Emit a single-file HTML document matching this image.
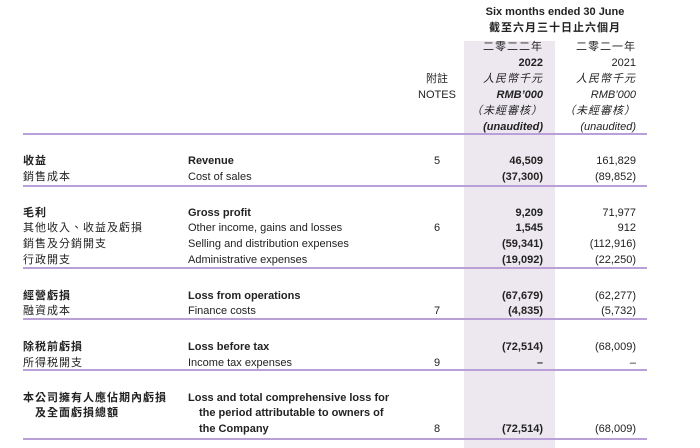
<!DOCTYPE html>
<html><head><meta charset="utf-8"><style>
body{margin:0;width:700px;height:448px;background:#fff;position:relative;overflow:hidden;font-family:"Liberation Sans","Noto Sans CJK TC",sans-serif;font-size:11px;color:#222;}
.t{position:absolute;white-space:nowrap;line-height:14px;}
.b{font-weight:bold}
.i{font-style:italic}
.r1{right:157px;text-align:right}
.r2{right:64px;text-align:right}
.n{left:417px;width:40px;text-align:center}
.shade{position:absolute;left:464px;top:41px;width:91px;height:407px;background:#ede8f0}
.ln{position:absolute;left:23px;width:624px;height:2px;background:#b9a0d6}
.c{left:23px;letter-spacing:1px}
.e{left:188px}
</style></head><body>
<div class="shade"></div>
<div class="t b" style="left:470px;width:170px;text-align:center;top:5px">Six months ended 30 June</div>
<div class="t b" style="left:470px;width:170px;text-align:center;top:21px;letter-spacing:1px">截至六月三十日止六個月</div>
<div class="t r1" style="top:40px;letter-spacing:1px">二零二二年</div>
<div class="t r2" style="top:40px;letter-spacing:1px">二零二一年</div>
<div class="t r1 b" style="top:56px">2022</div>
<div class="t r2" style="top:56px">2021</div>
<div class="t r1 i" style="top:72px;letter-spacing:1px">人民幣千元</div>
<div class="t r2 i" style="top:72px;letter-spacing:1px">人民幣千元</div>
<div class="t r1 b i" style="top:88px">RMB’000</div>
<div class="t r2 i" style="top:88px">RMB’000</div>
<div class="t r1 i" style="top:104px;letter-spacing:1px">（未經審核）</div>
<div class="t r2 i" style="top:104px;letter-spacing:1px">（未經審核）</div>
<div class="t r1 b i" style="top:120px">(unaudited)</div>
<div class="t r2 i" style="top:120px">(unaudited)</div>
<div class="t n" style="top:72px">附註</div>
<div class="t n" style="top:88px">NOTES</div>
<div class="ln" style="top:133px"></div>

<div class="t c b" style="top:154px">收益</div><div class="t e b" style="top:154px">Revenue</div><div class="t n" style="top:154px">5</div><div class="t r1 b" style="top:154px">46,509</div><div class="t r2" style="top:154px">161,829</div>
<div class="t c" style="top:170px">銷售成本</div><div class="t e" style="top:170px">Cost of sales</div><div class="t r1 b" style="top:170px">(37,300)</div><div class="t r2" style="top:170px">(89,852)</div>
<div class="ln" style="top:185px"></div>

<div class="t c b" style="top:206px">毛利</div><div class="t e b" style="top:206px">Gross profit</div><div class="t r1 b" style="top:206px">9,209</div><div class="t r2" style="top:206px">71,977</div>
<div class="t c" style="top:221px">其他收入、收益及虧損</div><div class="t e" style="top:221px">Other income, gains and losses</div><div class="t n" style="top:221px">6</div><div class="t r1 b" style="top:221px">1,545</div><div class="t r2" style="top:221px">912</div>
<div class="t c" style="top:237px">銷售及分銷開支</div><div class="t e" style="top:237px">Selling and distribution expenses</div><div class="t r1 b" style="top:237px">(59,341)</div><div class="t r2" style="top:237px">(112,916)</div>
<div class="t c" style="top:253px">行政開支</div><div class="t e" style="top:253px">Administrative expenses</div><div class="t r1 b" style="top:253px">(19,092)</div><div class="t r2" style="top:253px">(22,250)</div>
<div class="ln" style="top:267px"></div>

<div class="t c b" style="top:289px">經營虧損</div><div class="t e b" style="top:289px">Loss from operations</div><div class="t r1 b" style="top:289px">(67,679)</div><div class="t r2" style="top:289px">(62,277)</div>
<div class="t c" style="top:304px">融資成本</div><div class="t e" style="top:304px">Finance costs</div><div class="t n" style="top:304px">7</div><div class="t r1 b" style="top:304px">(4,835)</div><div class="t r2" style="top:304px">(5,732)</div>
<div class="ln" style="top:318px"></div>

<div class="t c b" style="top:340px">除税前虧損</div><div class="t e b" style="top:340px">Loss before tax</div><div class="t r1 b" style="top:340px">(72,514)</div><div class="t r2" style="top:340px">(68,009)</div>
<div class="t c" style="top:356px">所得税開支</div><div class="t e" style="top:356px">Income tax expenses</div><div class="t n" style="top:356px">9</div><div class="t r1 b" style="top:356px">–</div><div class="t r2" style="top:356px">–</div>
<div class="ln" style="top:369px"></div>

<div class="t c b" style="top:391px">本公司擁有人應佔期內虧損</div><div class="t e b" style="top:391px">Loss and total comprehensive loss for</div>
<div class="t c b" style="top:406px;left:35px">及全面虧損總額</div><div class="t e b" style="top:406px;left:199px">the period attributable to owners of</div>
<div class="t e b" style="top:422px;left:199px">the Company</div><div class="t n" style="top:422px">8</div><div class="t r1 b" style="top:422px">(72,514)</div><div class="t r2" style="top:422px">(68,009)</div>
<div class="ln" style="top:438px"></div>
</body></html>
